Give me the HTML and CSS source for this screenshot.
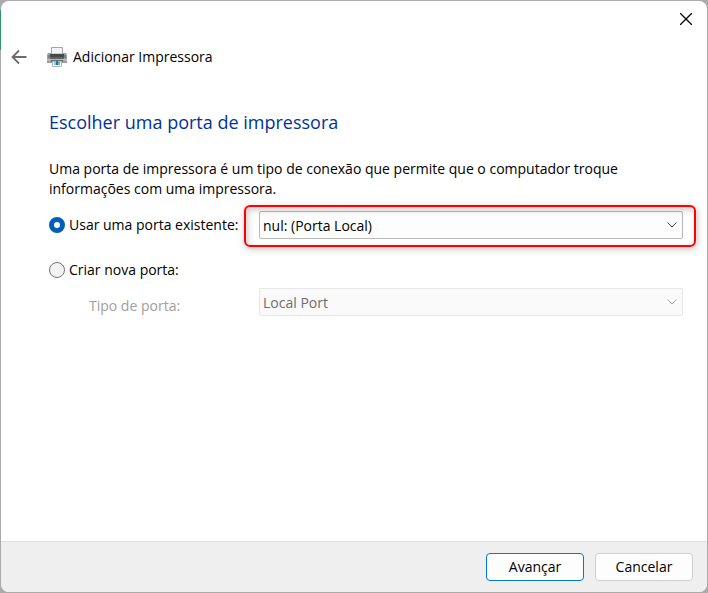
FILE: index.html
```html
<!DOCTYPE html>
<html lang="pt-BR">
<head>
    <meta charset="UTF-8">
    <meta name="viewport" content="width=device-width, initial-scale=1.0">
    <title>Adicionar Impressora</title>
    <link rel="stylesheet" href="styles.css">
</head>
<body>

<form class="dialog">
    <div class="titlebar">
        <button type="button" class="icon-button" aria-label="Fechar">
            <svg width="12" height="12" viewBox="0 0 12 12" fill="none" stroke="#000" stroke-width="1.3">
                <path d="M0 0L12 12M12 0L0 12"/>
            </svg>
        </button>
    </div>

    <header class="header">
        <button type="button" class="icon-button" aria-label="Voltar">
            <svg width="16" height="16" viewBox="0 0 16 16" fill="none" stroke="#6b6b6b" stroke-width="1.8">
                <path d="M15.500 8H1.500M8 1.500L1.500 8L8 14.500"/>
            </svg>
        </button>
        <svg class="printer" width="20" height="20" viewBox="0 0 20 20">
            <path d="M4.500 .5H15.500V7H4.500Z" fill="#f2f4f5" stroke="#a3a6a8"/>
            <path d="M1 6H4V8H16V6H19L20 8V16H0V8Z" fill="#9b9fa1"/>
            <path d="M3 7H17V11H3Z" fill="#45494b"/>
            <path d="M3 10H17V12H3Z" fill="#5f6466"/>
            <path d="M0 12H20V14H0Z" fill="#b4b8b9"/>
            <path d="M1 8H3V11H1ZM17 8H19V11H17Z" fill="#7d8284"/>
            <path d="M4 13H16V15H4Z" fill="#696e70"/>
            <path d="M5.500 14.500H14.500V19.500H5.500Z" fill="#f8fbfc" stroke="#b3b6b8"/>
            <path d="M7 14H10V18H7Z" fill="#8cc7e8"/>
            <path d="M9 14H11V18H9Z" fill="#2474a8"/>
            <path d="M11 15H13V18H11Z" fill="#63b49a"/>
        </svg>
        <span>Adicionar Impressora</span>
    </header>

    <main class="content">
        <h1>Escolher uma porta de impressora</h1>
        <p>Uma porta de impressora é um tipo de conexão que permite que o computador troque informações com uma impressora.</p>

        <div class="row">
            <label class="option" id="existingLabel">
                <input type="radio" name="port" value="existing" checked>
                Usar uma porta existente:
            </label>
            <div class="select highlight">
                <select aria-labelledby="existingLabel">
                    <option>nul: (Porta Local)</option>
                </select>
                <svg class="chevron" width="10" height="6" viewBox="0 0 10 6" fill="none" stroke="currentColor">
                    <path d="M.5 .5L5 5L9.500 .5"/>
                </svg>
            </div>
        </div>

        <div class="row row-new">
            <label class="option">
                <input type="radio" name="port" value="new">
                Criar nova porta:
            </label>
        </div>

        <div class="row">
            <label class="sub-label" for="portType">Tipo de porta:</label>
            <div class="select">
                <select id="portType" disabled>
                    <option>Local Port</option>
                </select>
                <svg class="chevron" width="10" height="6" viewBox="0 0 10 6" fill="none" stroke="currentColor">
                    <path d="M.5 .5L5 5L9.500 .5"/>
                </svg>
            </div>
        </div>
    </main>

    <footer class="footer">
        <button type="submit" class="button primary">Avançar</button>
        <button type="button" class="button">Cancelar</button>
    </footer>
</form>

</body>
</html>
```
FILE: styles.css
```css
* {
    box-sizing: border-box;
}

body {
    display: flex;
    min-height: 100vh;
    margin: 0;
    padding: 1px;
    background: linear-gradient(#2f9468, #2f9468) 0 10px / 1px 40px no-repeat, #ababab;
    color: #000000;
    font-family: "Segoe UI", "Open Sans", "Noto Sans", sans-serif;
    font-size: 14px;
    line-height: 20px;
}

button, select {
    font: inherit;
    color: inherit;
}

.dialog {
    display: flex;
    flex: 1;
    flex-direction: column;
    border-radius: 8px;
    background-color: #ffffff;
    overflow: hidden;
}

.titlebar {
    display: flex;
    justify-content: flex-end;
    padding: 8px 11px;
}

.icon-button {
    display: flex;
    align-items: center;
    justify-content: center;
    width: 20px;
    height: 20px;
    padding: 0;
    border: none;
    background: none;
}

.header {
    display: flex;
    align-items: center;
    padding: 10px 8px;
}

.printer {
    margin: 0 6px 0 18px;
}

.content {
    flex: 1;
    padding: 31px 24px 24px 48px;
}

h1 {
    margin: 0 0 23px;
    color: #003399;
    font-size: 18px;
    font-weight: normal;
    line-height: 28px;
}

p {
    margin: 0 0 12px;
}

.row {
    display: grid;
    grid-template-columns: 210px 1fr;
    align-items: center;
    min-height: 28px;
}

.row-new {
    margin: 17px 0 4px;
}

.option {
    display: flex;
    align-items: center;
    gap: 4px;
}

.option input {
    appearance: none;
    width: 16px;
    height: 16px;
    margin: 0;
    border: 1px solid #767676;
    border-radius: 50%;
    background-color: #f3f3f3;
}

.option input:checked {
    border: 5px solid #005fb8;
    background-color: #ffffff;
}

.sub-label {
    padding: 8px 0 0 40px;
    color: #a0a0a0;
}

.select {
    position: relative;
    display: flex;
}

.select select {
    appearance: none;
    width: 100%;
    height: 28px;
    padding: 1px 24px 0 3px;
    border: 1px solid #b9b9b9;
    border-radius: 2px;
    background-color: #fdfdfd;
}

.select select:disabled {
    border-color: #e6e6e6;
    background-color: #fafafa;
    color: #6d6d6d;
    opacity: 1;
}

.chevron {
    position: absolute;
    top: 11px;
    right: 6px;
    color: #444444;
    pointer-events: none;
}

select:disabled + .chevron {
    color: #a6a6a6;
}

.highlight::after {
    content: "";
    position: absolute;
    inset: -6px -13px -8px -15px;
    border: 2px solid #ff0000;
    border-radius: 6px;
    box-shadow: 1px 2px 7px rgba(0, 0, 0, 0.25), inset 2px 3px 6px rgba(0, 0, 0, 0.2);
    pointer-events: none;
}

.footer {
    display: flex;
    justify-content: flex-end;
    gap: 11px;
    padding: 11px 14px;
    border-top: 1px solid #dfdfdf;
    background-color: #efefef;
}

.button {
    width: 98px;
    height: 28px;
    padding: 0;
    border: 1px solid #d0d0d0;
    border-radius: 4px;
    background-color: #fdfdfd;
}

.button.primary {
    border-color: #0078d4;
}
```
